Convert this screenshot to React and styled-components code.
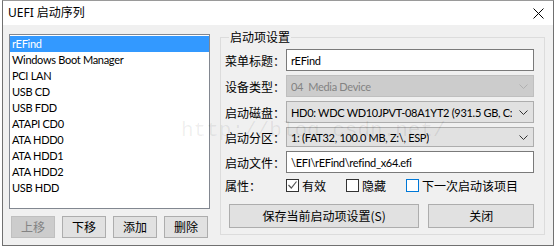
import React from 'react';
import styled, { createGlobalStyle } from 'styled-components';

const GlobalStyle = createGlobalStyle`
  html, body {
    margin: 0;
    padding: 0;
    background: #ffffff;
  }
  body {
    font-family: Lato, "Noto Sans CJK SC", sans-serif;
    font-size: 11px;
    letter-spacing: -0.3px;
  }
`;

const Window = styled.div`
  position: relative;
  box-sizing: border-box;
  margin-left: 2px;
  width: 552px;
  height: 246px;
  border: 1px solid #707070;
  border-top-color: #9a9a9a;
  display: flex;
  flex-direction: column;
  background: #f0f0f0;
  color: #000;
`;

const TitleBar = styled.div`
  height: 24px;
  background: #ffffff;
  display: flex;
  align-items: center;
  justify-content: space-between;
  padding: 0 9px 0 5px;
  font-family: "Noto Sans", "Noto Sans CJK SC", sans-serif;
  font-size: 12px;
  letter-spacing: 0;
  line-height: 24px;
`;

const CloseIcon = styled.svg`
  width: 11px;
  height: 11px;
`;

const Body = styled.div`
  flex: 1;
  display: flex;
  padding: 9px 0 0 6px;
  gap: 10px;
`;

const LeftColumn = styled.div`
  width: 201px;
  display: flex;
  flex-direction: column;
  gap: 7px;
`;

const ListBox = styled.ul`
  box-sizing: border-box;
  list-style: none;
  margin: 0;
  padding: 1px 0 0;
  height: 175px;
  background: #ffffff;
  border: 1px solid #828790;
`;

const ListItem = styled.li`
  height: 16px;
  line-height: 16px;
  padding-left: 2px;
  white-space: nowrap;
  background: ${(p) => (p.$selected ? '#3399ff' : 'transparent')};
  color: ${(p) => (p.$selected ? '#ffffff' : '#000000')};
`;

const ButtonRow = styled.div`
  display: flex;
  gap: 7px;
  padding-left: 2px;
`;

const Button = styled.button`
  box-sizing: border-box;
  width: ${(p) => p.$w || 44}px;
  height: ${(p) => p.$h || 22}px;
  margin: 0;
  padding: 0;
  font-family: "Noto Sans CJK SC", "Noto Sans", sans-serif;
  font-size: 12px;
  letter-spacing: 0;
  line-height: 1;
  border: 1px solid ${(p) => (p.disabled ? '#bfbfbf' : '#adadad')};
  background: ${(p) => (p.disabled ? '#cccccc' : '#e1e1e1')};
  color: ${(p) => (p.disabled ? '#838383' : '#000000')};
`;

const GroupBox = styled.fieldset`
  box-sizing: border-box;
  min-width: 0;
  width: 325px;
  height: 205px;
  margin: -4px 0 0;
  padding: 5px 10px 0 4px;
  border: 1px solid #dcdcdc;
  display: flex;
  flex-direction: column;
`;

const GroupTitle = styled.legend`
  font-family: "Noto Sans CJK SC", sans-serif;
  font-size: 12px;
  letter-spacing: 0;
  line-height: 14px;
  padding: 0 1px;
  margin-left: 4px;
`;

const FieldRow = styled.div`
  display: flex;
  align-items: center;
  height: ${(p) => p.$h || 22}px;
  margin-top: ${(p) => p.$mt || 0}px;
`;

const Label = styled.span`
  flex: none;
  width: 61px;
  font-family: "Noto Sans CJK SC", sans-serif;
  font-size: 12px;
  letter-spacing: 0;
  white-space: nowrap;
`;

const TextBox = styled.div`
  box-sizing: border-box;
  flex: 1;
  min-width: 0;
  height: 100%;
  display: flex;
  align-items: center;
  padding-left: 4px;
  background: #ffffff;
  border: 1px solid #7a7a7a;
  white-space: nowrap;
`;

const Combo = styled.div`
  box-sizing: border-box;
  flex: 1;
  min-width: 0;
  height: 100%;
  display: flex;
  align-items: center;
  justify-content: space-between;
  padding: 0 5px 0 4px;
  border: 1px solid ${(p) => (p.$disabled ? '#bfbfbf' : '#adadad')};
  background: ${(p) => (p.$disabled ? '#cccccc' : '#e1e1e1')};
  color: ${(p) => (p.$disabled ? '#838383' : '#000000')};
  white-space: nowrap;
  overflow: hidden;
`;

const ComboText = styled.span`
  min-width: 0;
  overflow: hidden;
`;

const Chevron = styled.svg`
  flex: none;
  width: 9px;
  height: 5px;
  margin-left: 4px;
`;

const CheckRow = styled.div`
  display: flex;
  align-items: center;
  height: 22px;
  margin-top: 1px;
`;

const CheckItem = styled.label`
  display: flex;
  align-items: center;
  gap: 3px;
  margin-right: ${(p) => p.$mr || 0}px;
  font-family: "Noto Sans CJK SC", sans-serif;
  font-size: 12px;
  letter-spacing: 0;
`;

const Box = styled.span`
  box-sizing: border-box;
  width: 13px;
  height: 13px;
  display: inline-flex;
  align-items: center;
  justify-content: center;
  background: #ffffff;
  border: 1px solid ${(p) => (p.$focus ? '#0078d7' : '#333333')};
`;

const ActionRow = styled.div`
  display: flex;
  gap: 9px;
  margin-top: 8px;
  padding-left: 4px;
`;

const Watermark = styled.div`
  position: absolute;
  left: 178px;
  top: 118px;
  font-family: "Liberation Mono", monospace;
  font-size: 21px;
  letter-spacing: 0;
  color: rgba(0, 0, 0, 0.07);
  pointer-events: none;
  white-space: nowrap;
`;

const items = [
  'rEFind',
  'Windows Boot Manager',
  'PCI LAN',
  'USB CD',
  'USB FDD',
  'ATAPI CD0',
  'ATA HDD0',
  'ATA HDD1',
  'ATA HDD2',
  'USB HDD',
];

const Arrow = ({ color }) => (
  <Chevron viewBox="0 0 9 5">
    <polyline points="0.5,0.5 4.5,4.5 8.5,0.5" fill="none" stroke={color} strokeWidth="1" />
  </Chevron>
);

const App = () => {
  return (
    <>
      <GlobalStyle />
      <Window>
        <TitleBar>
          <span>UEFI 启动序列</span>
          <CloseIcon viewBox="0 0 11 11">
            <path d="M0.5 0.5 L10.5 10.5 M10.5 0.5 L0.5 10.5" stroke="#000" strokeWidth="1" />
          </CloseIcon>
        </TitleBar>
        <Body>
          <LeftColumn>
            <ListBox>
              {items.map((it, i) => (
                <ListItem key={it} $selected={i === 0}>{it}</ListItem>
              ))}
            </ListBox>
            <ButtonRow>
              <Button disabled>上移</Button>
              <Button>下移</Button>
              <Button>添加</Button>
              <Button>删除</Button>
            </ButtonRow>
          </LeftColumn>
          <GroupBox>
            <GroupTitle>启动项设置</GroupTitle>
            <FieldRow>
              <Label>菜单标题：</Label>
              <TextBox>rEFind</TextBox>
            </FieldRow>
            <FieldRow $mt={4}>
              <Label>设备类型：</Label>
              <Combo $disabled>
                <ComboText>04&nbsp;&nbsp;Media Device</ComboText>
                <Arrow color="#b0b0b0" />
              </Combo>
            </FieldRow>
            <FieldRow $mt={4}>
              <Label>启动磁盘：</Label>
              <Combo>
                <ComboText>HD0: WDC WD10JPVT-08A1YT2 (931.5 GB, C:</ComboText>
                <Arrow color="#333" />
              </Combo>
            </FieldRow>
            <FieldRow $mt={4} $h={20}>
              <Label>启动分区：</Label>
              <Combo>
                <ComboText>1: (FAT32, 100.0 MB, Z:\, ESP)</ComboText>
                <Arrow color="#333" />
              </Combo>
            </FieldRow>
            <FieldRow $mt={4}>
              <Label>启动文件：</Label>
              <TextBox>\EFI\rEFind\refind_x64.efi</TextBox>
            </FieldRow>
            <CheckRow>
              <Label>属性：</Label>
              <CheckItem $mr={20}>
                <Box>
                  <svg width="9" height="8" viewBox="0 0 9 8">
                    <polyline points="0.5,4 3.3,7 8.5,0.5" fill="none" stroke="#555" strokeWidth="1.2" />
                  </svg>
                </Box>
                有效
              </CheckItem>
              <CheckItem $mr={20}>
                <Box />
                隐藏
              </CheckItem>
              <CheckItem>
                <Box $focus />
                下一次启动该项目
              </CheckItem>
            </CheckRow>
            <ActionRow>
              <Button $w={191} $h={24}>保存当前启动项设置(S)</Button>
              <Button $w={106} $h={24}>关闭</Button>
            </ActionRow>
          </GroupBox>
        </Body>
        <Watermark>http://blog.csdn.net/</Watermark>
      </Window>
    </>
  );
};

export default App;
